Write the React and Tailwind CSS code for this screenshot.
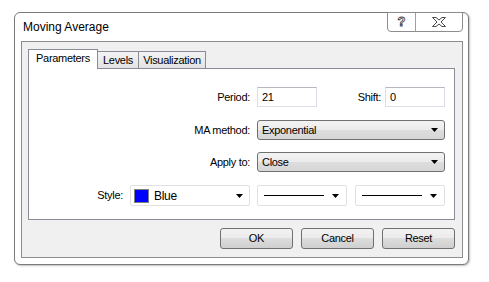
import React from "react";

const Arrow = () => (
    <svg width="7" height="4" viewBox="0 0 7 4" className="shrink-0">
        <polygon points="0,0 7,0 3.5,4" fill="#000" />
    </svg>
);

const TextBox = ({ value, width }) => (
    <div
        className={`${width} h-[20px] bg-white border border-[#dbdfe6] border-t-[#b5b8bf] flex items-center pl-[4px] text-[11px]`}
    >
        {value}
    </div>
);

const DropDown = ({ value }) => (
    <div className="w-[188px] h-[20px] ml-[7px] rounded-[3px] border border-[#707070] bg-[linear-gradient(#f3f3f3,#ebebeb_50%,#dddddd_50%,#d6d6d6)] flex items-center justify-between pl-[4px] pr-[6px] text-[11px]">
        <span>{value}</span>
        <Arrow />
    </div>
);

const LineCombo = () => (
    <div className="w-[90px] h-[21px] bg-white border border-[#e1e1e1] rounded-[2px] flex items-center pl-[6px] pr-[7px]">
        <div className="w-[60px] h-px bg-black" />
        <div className="flex-1" />
        <Arrow />
    </div>
);

const Button = ({ label }) => (
    <div className="w-[73px] h-[21px] rounded-[3px] border border-[#707070] bg-[linear-gradient(#f2f2f2,#ebebeb_50%,#dddddd_50%,#cfcfcf)] flex items-center justify-center text-[11px]">
        {label}
    </div>
);

export default function App() {
    return (
        <div className="w-[489px] h-[282px] bg-white pt-[12px] pl-[14px] font-['Liberation_Sans',Arial,sans-serif] text-black">
            <div className="w-[455px] h-[253px] border border-[#7a7a7a] rounded-[6px] bg-white flex flex-col shadow-[1px_1px_2px_rgba(0,0,0,0.25)]">
                {/* title bar */}
                <div className="h-[28px] flex items-start justify-between">
                    <div className="pl-[8px] leading-[28px] text-[12px]">
                        Moving Average
                    </div>
                    <div className="-mt-px mr-[5px] h-[20px] flex border border-[#8d8d8d] rounded-b-[4px] bg-white">
                        <div className="w-[28px] border-r border-[#a0a0a0] flex items-center justify-center text-[13px] font-bold text-white [-webkit-text-stroke:0.8px_#3a3a3a]">
                            ?
                        </div>
                        <div className="w-[46px] flex items-center justify-center">
                            <svg width="14" height="10" viewBox="0 0 14 10">
                                <polygon
                                    points="0.5,0.5 4,0.5 7,3 10,0.5 13.5,0.5 9,5 13.5,9.5 10,9.5 7,7 4,9.5 0.5,9.5 5,5"
                                    fill="#fff"
                                    stroke="#4a4a4a"
                                    strokeWidth="1"
                                />
                            </svg>
                        </div>
                    </div>
                </div>

                {/* client area */}
                <div className="ml-[6px] mr-[5px] h-[217px] border border-[#8c8c8c] bg-[#f0f0f0] pt-[7px] pl-[6px] pr-[7px] flex flex-col tracking-[-0.3px]">
                    {/* tabs */}
                    <div className="h-[19px] flex items-end text-[11px]">
                        <div className="relative z-10 -mb-px h-[20px] w-[70px] bg-white border border-b-0 border-[#898c95] flex items-center justify-center pb-[2px]">
                            Parameters
                        </div>
                        <div className="h-[17px] w-[42px] -ml-px bg-[linear-gradient(#f3f3f3,#e3e3e3)] border border-b-0 border-[#898c95] flex items-center justify-center">
                            Levels
                        </div>
                        <div className="h-[17px] w-[68px] -ml-px bg-[linear-gradient(#f3f3f3,#e3e3e3)] border border-b-0 border-[#898c95] flex items-center justify-center">
                            Visualization
                        </div>
                    </div>

                    {/* panel */}
                    <div className="h-[152px] bg-white border border-[#898c95] pt-[18px] text-[11px] flex flex-col">
                        <div className="h-[20px] flex items-center">
                            <div className="w-[221px] text-right">Period:</div>
                            <div className="ml-[7px]">
                                <TextBox value="21" width="w-[60px]" />
                            </div>
                            <div className="w-[64px] text-right">Shift:</div>
                            <div className="ml-[4px]">
                                <TextBox value="0" width="w-[60px]" />
                            </div>
                        </div>

                        <div className="h-[20px] mt-[13px] flex items-center">
                            <div className="w-[221px] text-right">MA method:</div>
                            <DropDown value="Exponential" />
                        </div>

                        <div className="h-[20px] mt-[12px] flex items-center">
                            <div className="w-[221px] text-right">Apply to:</div>
                            <DropDown value="Close" />
                        </div>

                        <div className="h-[21px] mt-[13px] flex items-center">
                            <div className="w-[94px] text-right">Style:</div>
                            <div className="ml-[7px] w-[120px] h-[21px] bg-white border border-[#e1e1e1] rounded-[2px] flex items-center pl-[3px] pr-[6px]">
                                <div className="w-[15px] h-[14px] bg-[#0000ff] border border-[#808080]" />
                                <span className="ml-[5px] text-[12px]">Blue</span>
                                <div className="flex-1" />
                                <Arrow />
                            </div>
                            <div className="ml-[7px]">
                                <LineCombo />
                            </div>
                            <div className="ml-[8px]">
                                <LineCombo />
                            </div>
                        </div>
                    </div>

                    {/* buttons */}
                    <div className="mt-[8px] flex justify-end gap-[8px]">
                        <Button label="OK" />
                        <Button label="Cancel" />
                        <Button label="Reset" />
                    </div>
                </div>
            </div>
        </div>
    );
}
